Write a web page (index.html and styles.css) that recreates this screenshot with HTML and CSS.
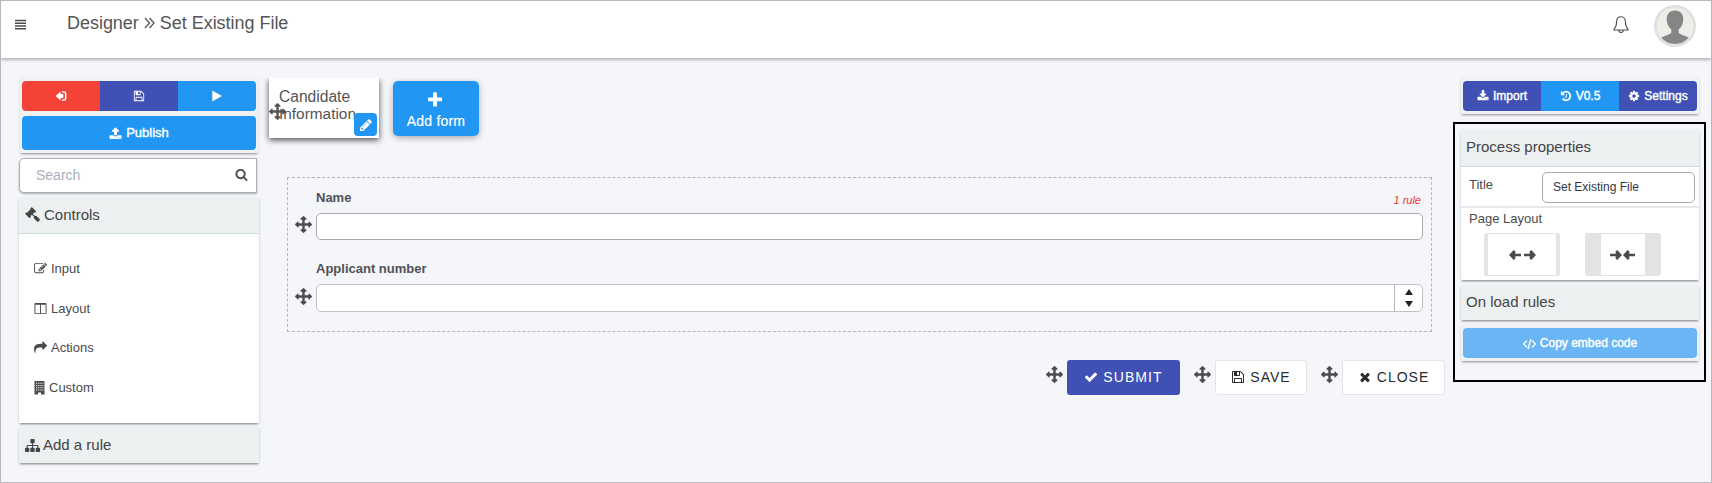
FILE: index.html
```html
<!DOCTYPE html>
<html lang="en">
<head>
<meta charset="utf-8">
<title>Designer</title>
<link rel="stylesheet" href="styles.css">
</head>
<body>
<svg class="sprite" aria-hidden="true">
  <symbol id="move" viewBox="0 0 1792 1792"><path d="M1792 896q0 26-19 45l-256 256q-19 19-45 19t-45-19-19-45v-128h-384v384h128q26 0 45 19t19 45-19 45l-256 256q-19 19-45 19t-45-19l-256-256q-19-19-19-45t19-45 45-19h128v-384h-384v128q0 26-19 45t-45 19-45-19l-256-256q-19-19-19-45t19-45l256-256q19-19 45-19t45 19 19 45v128h384v-384h-128q-26 0-45-19t-19-45 19-45l256-256q19-19 45-19t45 19l256 256q19 19 19 45t-19 45-45 19h-128v384h384v-128q0-26 19-45t45-19 45 19l256 256q19 19 19 45z"/></symbol>
  <symbol id="floppy" viewBox="0 0 1792 1792"><path d="M512 1536h768v-384h-768v384zm896 0h128v-896q0-14-10-38.500t-20-34.500l-281-281q-10-10-34-20t-39-10v416q0 40-28 68t-68 28h-576q-40 0-68-28t-28-68v-416h-128v1280h128v-416q0-40 28-68t68-28h832q40 0 68 28t28 68v416zm-384-928v-320q0-13-9.500-22.500t-22.500-9.500h-192q-13 0-22.500 9.500t-9.500 22.500v320q0 13 9.500 22.500t22.500 9.500h192q13 0 22.500-9.500t9.500-22.500zm640 32v928q0 40-28 68t-68 28h-1344q-40 0-68-28t-28-68v-1344q0-40 28-68t68-28h928q40 0 88 20t76 48l280 280q28 28 48 76t20 88z"/></symbol>
  <symbol id="search" viewBox="0 0 1792 1792"><path d="M1216 832q0-185-131.500-316.500t-316.500-131.500-316.500 131.500-131.500 316.500 131.500 316.500 316.500 131.500 316.500-131.500 131.500-316.500zm512 832q0 52-38 90t-90 38q-54 0-90-38l-343-342q-179 124-399 124-143 0-273.500-55.500t-225-150-150-225-55.500-273.500 55.500-273.500 150-225 225-150 273.500-55.500 273.500 55.500 225 150 150 225 55.500 273.500q0 220-124 399l343 343q37 37 37 90z"/></symbol>
  <symbol id="upload" viewBox="0 0 1792 1792"><path d="M1344 1472q0-26-19-45t-45-19-45 19-19 45 19 45 45 19 45-19 19-45zm256 0q0-26-19-45t-45-19-45 19-19 45 19 45 45 19 45-19 19-45zm128-224v320q0 40-28 68t-68 28h-1472q-40 0-68-28t-28-68v-320q0-40 28-68t68-28h427q21 56 70.500 92t110.500 36h256q61 0 110.500-36t70.500-92h427q40 0 68 28t28 68zm-325-648q-17 40-59 40h-256v448q0 26-19 45t-45 19h-256q-26 0-45-19t-19-45v-448h-256q-42 0-59-40-17-39 14-69l448-448q18-19 45-19t45 19l448 448q31 30 14 69z"/></symbol>
  <symbol id="download" viewBox="0 0 1792 1792"><path d="M1344 1344q0-26-19-45t-45-19-45 19-19 45 19 45 45 19 45-19 19-45zm256 0q0-26-19-45t-45-19-45 19-19 45 19 45 45 19 45-19 19-45zm128-224v320q0 40-28 68t-68 28h-1472q-40 0-68-28t-28-68v-320q0-40 28-68t68-28h465l135 136q58 56 136 56t136-56l136-136h464q40 0 68 28t28 68zm-325-569q17 41-14 70l-448 448q-18 19-45 19t-45-19l-448-448q-31-29-14-70 17-39 59-39h256v-448q0-26 19-45t45-19h256q26 0 45 19t19 45v448h256q42 0 59 39z"/></symbol>
  <symbol id="gavel" viewBox="0 0 1792 1792"><path d="M1771 1536q0 53-37 90l-107 108q-39 37-91 37-53 0-90-37l-363-364q-38-36-38-90 0-53 43-96l-256-256-126 126q-14 14-34 14t-34-14q2 2 12.500 12t12.500 13 10 11.500 10 13.500 6 13.500 5.500 16.500 1.500 18q0 38-28 68-3 3-16.500 18t-19 20.500-18.500 16.500-22 15.500-22 9-26 4.500q-40 0-68-28l-408-408q-28-28-28-68 0-13 4.500-26t9-22 15.500-22 16.500-18.500 20.500-19 18-16.500q30-28 68-28 10 0 18 1.500t16.500 5.500 13.500 6 13.500 10 11.500 10 13 12.500 12 12.500q-14-14-14-34t14-34l348-348q14-14 34-14t34 14q-2-2-12.500-12t-12.500-13-10-11.500-10-13.500-6-13.500-5.500-16.500-1.500-18q0-38 28-68 3-3 16.500-18t19-20.500 18.500-16.500 22-15.500 22-9 26-4.500q40 0 68 28l408 408q28 28 28 68 0 13-4.500 26t-9 22-15.500 22-16.500 18.500-20.500 19-18 16.500q-30 28-68 28-10 0-18-1.500t-16.500-5.500-13.500-6-13.500-10-11.500-10-13-12.500-12-12.500q14 14 14 34t-14 34l-126 126 256 256q43-43 96-43 52 0 91 37l363 363q37 39 37 91z"/></symbol>
  <symbol id="edit" viewBox="0 0 1792 1792"><path d="M888 1184l116-116-152-152-116 116v56h96v96h56zm440-720q-16-16-33 1l-350 350q-17 17-1 33t33-1l350-350q17-17 1-33zm80 594v190q0 119-84.500 203.500t-203.500 84.500h-832q-119 0-203.500-84.500t-84.500-203.500v-832q0-119 84.500-203.500t203.500-84.500h832q63 0 117 25 15 7 18 23 3 17-9 29l-49 49q-14 14-32 8-23-6-45-6h-832q-66 0-113 47t-47 113v832q0 66 47 113t113 47h832q66 0 113-47t47-113v-126q0-13 9-22l64-64q15-15 35-7t20 29zm-96-738l288 288-672 672h-288v-288zm444 132l-92 92-288-288 92-92q28-28 68-28t68 28l152 152q28 28 28 68t-28 68z"/></symbol>
  <symbol id="columns" viewBox="0 0 1792 1792"><path d="M224 1536h608v-1152h-640v1120q0 13 9.500 22.500t22.500 9.500zm1376-32v-1120h-640v1152h608q13 0 22.500-9.500t9.500-22.500zm128-1216v1216q0 66-47 113t-113 47h-1344q-66 0-113-47t-47-113v-1216q0-66 47-113t113-47h1344q66 0 113 47t47 113z"/></symbol>
  <symbol id="share" viewBox="0 0 1792 1792"><path d="M1792 640q0 26-19 45l-512 512q-19 19-45 19t-45-19-19-45v-256h-224q-98 0-175.500 6t-154 21.500-133 42.500-105.500 69.500-80 101-48.500 138.500-17.500 181q0 55 5 123 0 6 2.500 23.500t2.500 26.500q0 15-8.500 25t-23.500 10q-16 0-28-17-7-9-13-22t-13.500-30-10.500-24q-127-285-127-451 0-199 53-333 162-403 875-403h224v-256q0-26 19-45t45-19 45 19l512 512q19 19 19 45z"/></symbol>
  <symbol id="building" viewBox="0 0 11 14"><path fill-rule="evenodd" d="M.5 0h10v13.500H7v-2H4v2H.5zM2 1.800v1h1.200v-1zm2.200 0v1h1.200v-1zm2.200 0v1h1.200v-1zm2.100 0v1h1v-1zM2 4v1h1.200V4zm2.200 0v1h1.200V4zm2.200 0v1h1.200V4zm2.100 0v1h1V4zM2 6.200v1h1.200v-1zm2.200 0v1h1.200v-1zm2.200 0v1h1.200v-1zm2.100 0v1h1v-1zM2 8.400v1h1.200v-1zm2.200 0v1h1.200v-1zm2.200 0v1h1.200v-1zm2.100 0v1h1v-1z"/></symbol>
  <symbol id="sitemap" viewBox="0 0 1792 1792"><path d="M1792 1248v320q0 40-28 68t-68 28h-320q-40 0-68-28t-28-68v-320q0-40 28-68t68-28h96v-192h-512v192h96q40 0 68 28t28 68v320q0 40-28 68t-68 28h-320q-40 0-68-28t-28-68v-320q0-40 28-68t68-28h96v-192h-512v192h96q40 0 68 28t28 68v320q0 40-28 68t-68 28h-320q-40 0-68-28t-28-68v-320q0-40 28-68t68-28h96v-192q0-52 38-90t90-38h512v-192h-96q-40 0-68-28t-28-68v-320q0-40 28-68t68-28h320q40 0 68 28t28 68v320q0 40-28 68t-68 28h-96v192h512q52 0 90 38t38 90v192h96q40 0 68 28t28 68z"/></symbol>
  <symbol id="check" viewBox="0 0 1792 1792"><path d="M1671 566q0 40-28 68l-724 724-136 136q-28 28-68 28t-68-28l-136-136-362-362q-28-28-28-68t28-68l136-136q28-28 68-28t68 28l294 295 656-657q28-28 68-28t68 28l136 136q28 28 28 68z"/></symbol>
  <symbol id="times" viewBox="0 0 1792 1792"><path d="M1490 1322q0 40-28 68l-136 136q-28 28-68 28t-68-28l-294-294-294 294q-28 28-68 28t-68-28l-136-136q-28-28-28-68t28-68l294-294-294-294q-28-28-28-68t28-68l136-136q28-28 68-28t68 28l294 294 294-294q28-28 68-28t68 28l136 136q28 28 28 68t-28 68l-294 294 294 294q28 28 28 68z"/></symbol>
  <symbol id="plus" viewBox="0 0 1792 1792"><path d="M1600 736v192q0 40-28 68t-68 28h-416v416q0 40-28 68t-68 28h-192q-40 0-68-28t-28-68v-416h-416q-40 0-68-28t-28-68v-192q0-40 28-68t68-28h416v-416q0-40 28-68t68-28h192q40 0 68 28t28 68v416h416q40 0 68 28t28 68z"/></symbol>
  <symbol id="pencil" viewBox="0 0 1792 1792"><path d="M491 1536l91-91-235-235-91 91v107h128v128h107zm523-928q0-22-22-22-10 0-17 7l-542 542q-7 7-7 17 0 22 22 22 10 0 17-7l542-542q7-7 7-17zm-54-192l416 416-832 832h-416v-416zm683 96q0 53-37 90l-166 166-416-416 166-165q36-38 90-38 53 0 91 38l235 234q37 39 37 91z"/></symbol>
  <symbol id="play" viewBox="0 0 1792 1792"><path d="M1576 927l-1328 738q-23 13-39.500 3t-16.500-36v-1472q0-26 16.500-36t39.500 3l1328 738q23 13 23 31t-23 31z"/></symbol>
  <symbol id="cog" viewBox="0 0 1792 1792"><path d="M1152 896q0-106-75-181t-181-75-181 75-75 181 75 181 181 75 181-75 75-181zm512-109v222q0 12-8 23t-20 13l-185 28q-19 54-39 91 35 50 107 138 10 12 10 25t-9 23q-27 37-99 108t-94 71q-12 0-26-9l-138-108q-44 23-91 38-16 136-29 186-7 28-36 28h-222q-14 0-24.500-8.500t-11.500-21.500l-28-184q-49-16-90-37l-141 107q-10 9-25 9-14 0-25-11-126-114-165-168-7-10-7-23 0-12 8-23 15-21 51-66.500t54-70.500q-27-50-41-99l-183-27q-13-2-21-12.500t-8-23.500v-222q0-12 8-23t19-13l186-28q14-46 39-92-40-57-107-138-10-12-10-24 0-10 9-23 26-36 98.500-107.500t94.500-71.500q13 0 26 10l138 107q44-23 91-38 16-136 29-186 7-28 36-28h222q14 0 24.500 8.500t11.500 21.500l28 184q49 16 90 37l142-107q9-9 24-9 13 0 25 10 129 119 165 170 7 8 7 22 0 12-8 23-15 21-51 66.500t-54 70.500q26 50 41 98l183 28q13 2 21 12.500t8 23.500z"/></symbol>
  <symbol id="history" viewBox="0 0 1792 1792"><path d="M1664 896q0 156-61 298t-164 245-245 164-298 61q-172 0-327-72.500t-264-204.500q-7-10-6.500-22.500t8.500-20.500l137-138q10-9 25-9 16 2 23 12 73 95 179 147t225 52q104 0 198.500-40.500t163.500-109.500 109.500-163.500 40.500-198.500-40.500-198.500-109.500-163.500-163.500-109.500-198.500-40.500q-98 0-188 35.500t-160 101.500l137 138q31 30 14 69-17 40-59 40h-448q-26 0-45-19t-19-45v-448q0-42 40-59 39-17 69 14l130 129q107-101 244.500-156.500t284.500-55.500q156 0 298 61t245 164 164 245 61 298zM1024 640v448q0 14-9 23t-23 9h-320q-14 0-23-9t-9-23v-64q0-14 9-23t23-9h224v-352q0-14 9-23t23-9h64q14 0 23 9t9 23z"/></symbol>
  <symbol id="code" viewBox="-20 0 1832 1792"><path d="M553 1399l-50 50q-10 10-23 10t-23-10l-466-466q-10-10-10-23t10-23l466-466q10-10 23-10t23 10l50 50q10 10 10 23t-10 23l-393 393 393 393q10 10 10 23t-10 23zm591-1067l-373 1291q-4 13-15.500 19.500t-23.500 2.500l-62-17q-13-4-19.500-15.500t-2.500-24.500l373-1291q4-13 15.500-19.500t23.500-2.500l62 17q13 4 19.500 15.500t2.500 24.500zm657 651l-466 466q-10 10-23 10t-23-10l-50-50q-10-10-10-23t10-23l393-393-393-393q-10-10-10-23t10-23l50-50q10-10 23-10t23 10l466 466q10 10 10 23t-10 23z" stroke="currentColor" stroke-width="70"/></symbol>
  <symbol id="exit" viewBox="0 0 11 10"><path d="M0 5 5 .4V3h2.800v4H5v2.600z"/><path d="M6.400 1h2.300q1.500 0 1.500 1.500v5Q10.200 9 8.700 9H6.400" fill="none" stroke="currentColor" stroke-width="1.500"/></symbol>
  <symbol id="arrow" viewBox="0 0 12 10"><path d="M0 5 4.800 0l1.500 1.300v2.400H12v2.600H6.300v2.400L4.800 10z"/></symbol>
</svg>

<div class="app">
  <header class="topbar">
    <svg class="menu" viewBox="0 0 11 10"><path d="M0 1.600h11M0 4.300h11M0 7h11M0 9.700h11" stroke="currentColor" stroke-width="1.500"/></svg>
    <h1 class="crumbs"><span>Designer</span><svg class="chevrons" viewBox="0 0 11 12"><path d="M1 1l4.500 5L1 11M5.500 1 10 6l-4.500 5" fill="none" stroke="currentColor" stroke-width="1.300"/></svg><span>Set Existing File</span></h1>
    <svg class="bell" viewBox="0 0 16 18"><path d="M8 .8C4.800.8 3.600 3 3.600 5.800c0 4-.7 5.600-2.600 7.400v.8h14v-.8c-1.900-1.800-2.600-3.400-2.600-7.400C12.400 3 11.200.8 8 .8zM5.800 14.300a2.200 2.200 0 0 0 4.400 0" fill="none" stroke="currentColor" stroke-width="1.100"/></svg>
    <svg class="avatar" viewBox="0 0 42 42"><circle cx="21" cy="21" r="19.700" fill="#eeede8" stroke="#dedfe1" stroke-width="2.600"/><path d="M21 5.500c-5.500 0-8.300 3.600-8.300 8.500 0 4.300 1.800 8.300 4.600 10.500v3.200c-1.500 2-7.300 3-10 5.100Q13 39 21 39t13.700-6.200c-2.700-2.100-8.500-3.100-10-5.100v-3.200c2.800-2.200 4.600-6.200 4.600-10.500 0-4.900-2.800-8.500-8.300-8.500z" fill="#858585"/></svg>
  </header>

  <main class="workspace">
    <aside class="left">
      <div class="panel tools">
        <div class="group">
          <button class="btn red"><svg class="i-exit"><use href="#exit"/></svg></button>
          <button class="btn indigo"><svg class="i12"><use href="#floppy"/></svg></button>
          <button class="btn blue"><svg class="i12"><use href="#play"/></svg></button>
        </div>
        <button class="btn blue publish"><svg class="i13"><use href="#upload"/></svg><span>Publish</span></button>
      </div>
      <div class="search"><span>Search</span><svg class="i13"><use href="#search"/></svg></div>
      <section class="card controls">
        <h2 class="bar"><svg class="i15"><use href="#gavel"/></svg>Controls</h2>
        <ul class="list">
          <li><svg class="i13"><use href="#edit"/></svg>Input</li>
          <li><svg class="i13"><use href="#columns"/></svg>Layout</li>
          <li><svg class="i13"><use href="#share"/></svg>Actions</li>
          <li><svg class="i-build"><use href="#building"/></svg>Custom</li>
        </ul>
      </section>
      <h2 class="bar rule-bar card"><svg class="i15"><use href="#sitemap"/></svg>Add a rule</h2>
    </aside>

    <section class="canvas">
      <div class="forms">
        <div class="form-tab"><span>Candidate</span><span>Information</span>
          <svg class="drag"><use href="#move"/></svg>
          <button class="pen"><svg class="i14"><use href="#pencil"/></svg></button>
        </div>
        <button class="add"><svg class="i-plus"><use href="#plus"/></svg><span>Add form</span></button>
      </div>
      <div class="drop">
        <div class="label-row"><label>Name</label><em>1 rule</em></div>
        <div class="field"><svg class="i16"><use href="#move"/></svg><div class="input"></div></div>
        <div class="label-row second"><label>Applicant number</label></div>
        <div class="field"><svg class="i16"><use href="#move"/></svg><div class="input number"><div class="spin"><i class="up"></i><i class="down"></i></div></div></div>
      </div>
      <div class="actions">
        <svg class="i16"><use href="#move"/></svg>
        <button class="act submit"><svg class="i14"><use href="#check"/></svg><span>SUBMIT</span></button>
        <svg class="i16"><use href="#move"/></svg>
        <button class="act save"><svg class="i14"><use href="#floppy"/></svg><span>SAVE</span></button>
        <svg class="i16"><use href="#move"/></svg>
        <button class="act close"><svg class="i14"><use href="#times"/></svg><span>CLOSE</span></button>
      </div>
    </section>

    <aside class="right">
      <div class="panel top-tools">
        <div class="group">
          <button class="btn indigo"><svg class="i12"><use href="#download"/></svg><span>Import</span></button>
          <button class="btn blue"><svg class="i12"><use href="#history"/></svg><span>V0.5</span></button>
          <button class="btn indigo"><svg class="i12"><use href="#cog"/></svg><span>Settings</span></button>
        </div>
      </div>
      <div class="outline">
        <section class="card props">
          <h2 class="bar">Process properties</h2>
          <div class="title-row"><span>Title</span><div class="title-input">Set Existing File</div></div>
          <div class="layout-row">
            <span>Page Layout</span>
            <div class="layouts">
              <div class="choice wide"><svg><use href="#arrow"/></svg><svg class="flip"><use href="#arrow"/></svg></div>
              <div class="choice narrow"><svg class="flip"><use href="#arrow"/></svg><svg><use href="#arrow"/></svg></div>
            </div>
          </div>
        </section>
        <h2 class="bar load card">On load rules</h2>
        <div class="panel copy"><button class="btn pale"><svg class="i13"><use href="#code"/></svg><span>Copy embed code</span></button></div>
      </div>
    </aside>
  </main>
</div>
</body>
</html>
```
FILE: styles.css
```css
* { box-sizing: border-box; }
body { margin: 0; font: 13px/16px "Liberation Sans", Arial, sans-serif; color: #4a4b4d; }
h1, h2, ul { margin: 0; padding: 0; font-weight: 400; list-style: none; }
button { font: inherit; border: 0; padding: 0; margin: 0; }
svg { fill: currentColor; flex: none; display: block; }
.sprite { position: absolute; width: 0; height: 0; }
.app { width: 1712px; height: 483px; border: 1px solid #b9babd; background: #f5f6fa; overflow: hidden; }

.topbar { height: 57px; background: #fff; box-shadow: 0 1px 4px rgba(0,0,0,.4); display: flex; align-items: flex-start; padding: 0 15px 0 14px; }
.menu { width: 11px; height: 10px; margin-top: 18px; overflow: visible; }
.crumbs { display: flex; margin: 11px auto 0 41px; font-size: 18px; line-height: 22px; color: #555; letter-spacing: -.03px; }
.chevrons { width: 11px; height: 12px; margin: 5px 5px 0; }
.bell { width: 16px; height: 18px; margin: 15px 25px 0 0; }
.avatar { width: 42px; height: 42px; margin-top: 4px; }

.workspace { display: grid; grid-template-columns: 240px 1fr 253px; padding: 0 5px 0 18px; }
.left { padding-top: 20px; }
.panel { background: #f0f1f4; box-shadow: 0 2px 2px -1px rgba(0,0,0,.35), 0 1px 3px rgba(0,0,0,.1); }
.tools { margin: 0 1px; padding: 3px 2px 3px; height: 75px; }
.group { display: flex; border-radius: 4px; overflow: hidden; height: 30px; }
.group .btn { flex: 1; }
.btn { display: flex; align-items: center; justify-content: center; gap: 4px; color: #fff; font-size: 12px; -webkit-text-stroke: .4px currentColor; }
.red { background: #f44336; }
.indigo { background: #3f51b5; }
.blue { background: #2196f3; }
.pale { background: #6ab6f5; }
.btn.publish { width: 100%; height: 34px; margin-top: 5px; border-radius: 4px; font-size: 13px; }
.search { display: flex; justify-content: space-between; align-items: center; height: 35px; width: 238px; margin-top: 5px; padding: 0 8px 2px 16px; border: 1px solid #b0b1b4; border-radius: 5px 0 0 5px; background: #fff; box-shadow: 0 1px 2px rgba(0,0,0,.3); font-size: 14px; }
.search span { color: #a9afba; }
.card { box-shadow: 0 2px 2px -1px rgba(0,0,0,.4), 0 1px 3px rgba(0,0,0,.15); }
.controls { margin-top: 5px; height: 225px; background: #fff; }
.bar { display: flex; align-items: center; gap: 4px; background: #ecf0f1; font-size: 15px; color: #444; }
.controls .bar { height: 36px; padding: 0 0 2px 6px; border-bottom: 1px solid #cddadd; }
.list { padding: 25px 0 0 15px; }
.list li { height: 39.700px; display: flex; gap: 4px; padding-top: 1px; line-height: 17px; font-size: 13px; align-items: flex-start; }
.list svg { margin-top: 2px; }
.rule-bar { height: 36px; margin-top: 4px; padding-left: 6px; gap: 3px; }

.i12 { width: 12px; height: 12px; }
.i13 { width: 13px; height: 13px; }
.i14 { width: 14px; height: 14px; }
.i15 { width: 15px; height: 15px; }
.i16 { width: 17px; height: 17px; }
.i-exit { width: 12px; height: 10px; }
.i-plus { width: 18px; height: 18px; margin-left: -2px; }
.i-build { width: 11px; height: 14px; }

.canvas { padding-top: 20px; }
.forms { display: flex; align-items: flex-start; padding-left: 10px; clip-path: inset(0 0 -30px -12px); }
.form-tab { position: relative; width: 110px; height: 60px; padding: 10px 0 0 10px; background: #fff; box-shadow: 0 2px 6px rgba(0,0,0,.7); font-size: 15.600px; line-height: 17px; color: #555; }
.form-tab > span { display: block; }
.form-tab > span + span { font-size: 15.400px; }
.drag { position: absolute; left: 0; top: 25px; width: 17px; height: 17px; }
.pen { position: absolute; right: 2px; bottom: 2px; width: 23px; height: 23px; border-radius: 4px; background: #2196f3; color: #fff; display: grid; place-items: center; }
.add { margin: 3px 0 0 14px; width: 86px; height: 55px; border-radius: 5px; background: #2196f3; color: #fff; box-shadow: 0 2px 6px rgba(0,0,0,.3); display: flex; flex-direction: column; align-items: center; padding-top: 10px; gap: 4px; font-size: 14px; letter-spacing: .2px; -webkit-text-stroke: .2px; }
.drop { margin: 39px 0 0 28px; width: 1145px; height: 155px; border: 1px dashed #b5b6ba; padding: 11px 8px 0; }
.label-row { display: flex; justify-content: space-between; height: 24px; padding: 0 2px 0 20px; }
.label-row label { font-weight: 700; line-height: 18px; color: #505155; }
.label-row em { font-size: 11px; line-height: 23px; color: #f0342c; }
.second { height: 44px; padding-top: 20px; }
.field { display: flex; align-items: center; gap: 4px; }
.field .i16 { margin: -4px 0 0 -1px; }
.input { flex: 1; height: 27px; border: 1px solid #a9aaad; border-radius: 5px; background: #fff; }
.number { height: 28px; border-color: #c0c1c4; display: flex; justify-content: flex-end; }
.spin { width: 28px; border-left: 1px solid #b5b6b9; display: flex; flex-direction: column; align-items: center; justify-content: space-between; padding: 4px 0; }
.up, .down { border: 4px solid transparent; border-top-width: 0; border-bottom: 6px solid #222; }
.down { transform: scaleY(-1); }
.actions { display: flex; align-items: center; margin: 28px 0 0 787px; height: 35px; }
.actions .i16 { margin-top: -7px; margin-right: 4px; }
.act { display: flex; align-items: center; justify-content: center; gap: 5px; height: 35px; border-radius: 3px; font-size: 14px; letter-spacing: 1.100px; padding-bottom: 1px; }
.submit { width: 113px; background: #3f51b5; color: #fff; margin-right: 14px; }
.save { width: 92px; margin-right: 14px; }
.close { width: 103px; }
.save, .close { background: #fff; border: 1px solid #e3e5e7; color: #2b2b2b; letter-spacing: 1px; }

.right { padding-top: 20px; }
.top-tools { margin: 0 7px 0 8px; height: 36px; padding: 3px 2px; }
.outline { margin-top: 8px; height: 260px; border: 2px solid #000; padding: 6px 5px 0 6px; }
.props { background: #fff; height: 150px; }
.right .bar { height: 37px; padding-left: 5px; }
.props .bar { border-bottom: 1px solid #cddadd; padding-bottom: 2px; }
.title-row { display: flex; justify-content: space-between; height: 41px; padding: 5px 4px 0 8px; border-bottom: 2px solid #e4eaec; line-height: 28px; }
.title-row span { line-height: 26px; }
.title-input { width: 153px; height: 31px; border: 1px solid #aaabae; border-radius: 5px; font-size: 12px; line-height: 28px; padding-left: 10px; color: #33364a; }
.layout-row { padding: 3px 0 0 8px; }
.layouts { display: flex; gap: 25px; padding: 6px 0 0 15px; }
.choice { width: 76px; height: 43px; border: 1px solid #e4e2e3; border-radius: 3px; display: flex; align-items: center; justify-content: center; gap: 3px; }
.choice svg { width: 12px; height: 10px; }
.wide { border-left-width: 4px; border-right-width: 4px; }
.narrow { border-left-width: 16px; border-right-width: 16px; gap: 1px; padding-right: 2px; }
.flip { transform: scaleX(-1); }
.right .load { height: 34px; margin-top: 6px; padding-bottom: 2px; }
.copy { margin-top: 5px; height: 36px; padding: 3px 2px; }
.copy .btn { width: 100%; height: 30px; border-radius: 4px; }
```
